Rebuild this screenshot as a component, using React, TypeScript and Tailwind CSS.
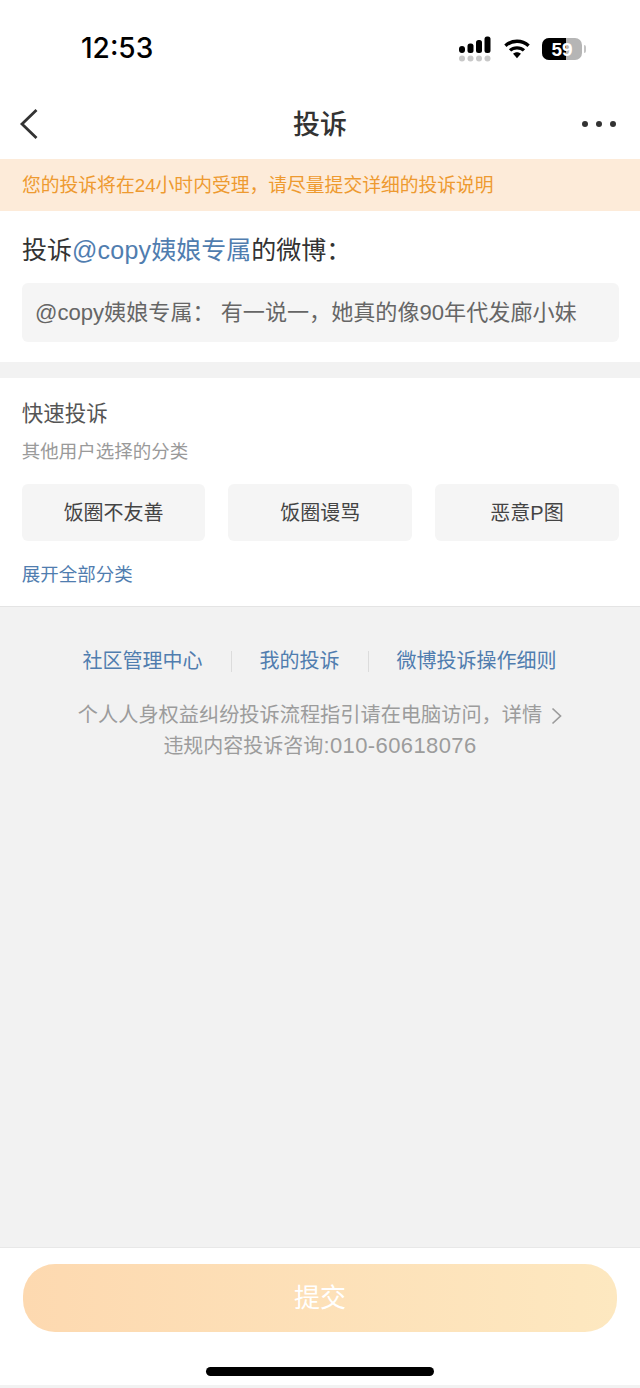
const cjk = "font-['Liberation_Sans','Noto_Sans_CJK_SC',sans-serif]";

function SignalIcon() {
  return (
    <svg width="34" height="26" viewBox="0 0 34 26" className="block">
      <rect x="1" y="10" width="6" height="7" rx="3" fill="#000" />
      <rect x="9.5" y="7.5" width="6" height="9.5" rx="2.5" fill="#000" />
      <rect x="18" y="4" width="6" height="13" rx="2.5" fill="#000" />
      <rect x="26.5" y="0.5" width="6" height="16.5" rx="2.5" fill="#000" />
      <circle cx="4" cy="22.5" r="3" fill="#c8c8c8" />
      <circle cx="12.5" cy="22.5" r="3" fill="#c8c8c8" />
      <circle cx="21" cy="22.5" r="3" fill="#c8c8c8" />
      <circle cx="29.5" cy="22.5" r="3" fill="#c8c8c8" />
    </svg>
  );
}

function WifiIcon() {
  return (
    <svg width="26" height="22" viewBox="0 0 28 22" className="block">
      <path d="M1.5 7.5C8.5 1 19.5 1 26.5 7.5" fill="none" stroke="#000" strokeWidth="3.6" />
      <path d="M6.5 12.5C10.5 8.8 17.5 8.8 21.5 12.5" fill="none" stroke="#000" strokeWidth="3.6" />
      <path d="M9.8 16.2C12.2 14 15.8 14 18.2 16.2L14 21Z" fill="#000" />
    </svg>
  );
}

function BackIcon() {
  return (
    <svg width="20" height="32" viewBox="0 0 20 32" className="block">
      <path d="M17.5 2L3 16L17.5 30" fill="none" stroke="#333" strokeWidth="2.8" />
    </svg>
  );
}

function DetailArrow() {
  return (
    <svg width="11" height="18" viewBox="0 0 11 18" className="ml-[9px] block">
      <path d="M1.5 1.5L9.5 9L1.5 16.5" fill="none" stroke="#9c9c9c" strokeWidth="1.7" />
    </svg>
  );
}

function Battery() {
  return (
    <div className="flex items-center gap-[2px]">
      <div className="relative h-[22px] w-[40px] overflow-hidden rounded-[7px] bg-[#b5b5b5]">
        <div className="absolute inset-y-0 left-0 w-[24px] bg-black" />
        <div className="absolute inset-0 flex items-center justify-center text-[19px] leading-none font-bold text-white font-['Liberation_Sans',sans-serif]">
          59
        </div>
      </div>
      <div className="h-[8px] w-[2px] rounded-r-full bg-[#c4c4c4]" />
    </div>
  );
}

function QuickButton({ label }: { label: string }) {
  return (
    <div className="flex h-[57px] flex-1 items-center justify-center rounded-[6px] bg-[#f5f5f5] text-[20px] text-[#444]">
      {label}
    </div>
  );
}

export default function App() {
  return (
    <div className={`${cjk} flex h-[1388px] w-[640px] flex-col overflow-hidden bg-[#f2f2f2]`}>
      {/* Status bar */}
      <div className="flex h-[100px] shrink-0 items-start justify-between bg-white pr-[54px] pl-[81px] pt-[31px]">
        <span className="text-[28px] leading-[34px] font-medium text-black font-['Inter',sans-serif]">12:53</span>
        <div className="flex items-center gap-[12px] pt-[5px]">
          <SignalIcon />
          <WifiIcon />
          <Battery />
        </div>
      </div>

      {/* Nav */}
      <div className="relative flex h-[59px] shrink-0 items-center justify-between bg-white pr-[24px] pb-[11px] pl-[19px] text-[#333]">
        <BackIcon />
        <span className="absolute inset-x-0 top-[5px] text-center text-[27px] leading-[40px] font-medium">投诉</span>
        <div className="flex gap-[8px]">
          <span className="h-[6px] w-[6px] rounded-full bg-[#333]" />
          <span className="h-[6px] w-[6px] rounded-full bg-[#333]" />
          <span className="h-[6px] w-[6px] rounded-full bg-[#333]" />
        </div>
      </div>

      {/* Notice */}
      <div className="flex h-[52px] shrink-0 items-center bg-[#fdebd9] px-[22px] pt-[2px] text-[18.8px] text-[#ee9a30]">
        您的投诉将在24小时内受理，请尽量提交详细的投诉说明
      </div>

      {/* Target post */}
      <div className="h-[151px] shrink-0 bg-white pr-[21px] pl-[22px] pt-[21px]">
        <div className="text-[25px] leading-[36px] text-[#333]">
          投诉
          <span className="text-[#507daf]">
            <span className="tracking-[0.2px]">@copy</span>姨娘专属
          </span>
          的微博：
        </div>
        <div className="mt-[15px] flex h-[59px] items-center rounded-[6px] bg-[#f5f5f5] px-[13px] text-[22.1px] whitespace-nowrap text-[#666]">
          @copy姨娘专属：&nbsp;有一说一，她真的像90年代发廊小妹
        </div>
      </div>

      {/* Quick complaint */}
      <div className="mt-[16px] flex h-[229px] shrink-0 flex-col border-b border-[#e4e4e4] bg-white pr-[21.2px] pl-[21.8px] pt-[21px]">
        <div className="text-[21.5px] leading-[30px] text-[#555]">快速投诉</div>
        <div className="mt-[10px] text-[18.5px] leading-[26px] text-[#9a9a9a]">其他用户选择的分类</div>
        <div className="mt-[19px] flex gap-[23px]">
          <QuickButton label="饭圈不友善" />
          <QuickButton label="饭圈谩骂" />
          <QuickButton label="恶意P图" />
        </div>
        <div className="mt-[21px] text-[18.5px] leading-[26px] text-[#507daf]">展开全部分类</div>
      </div>

      {/* Links */}
      <div className="flex grow flex-col items-center pt-[39px]">
        <div className="flex items-center pr-[1px] text-[20px] leading-[30px] text-[#507daf]">
          <span>社区管理中心</span>
          <span className="mx-[28px] h-[21px] w-px bg-[#dcdcdc]" />
          <span>我的投诉</span>
          <span className="mx-[28px] h-[21px] w-px bg-[#dcdcdc]" />
          <span>微博投诉操作细则</span>
        </div>
        <div className="mt-[24px] flex items-center text-[20.2px] leading-[31px] text-[#9c9c9c]">
          个人人身权益纠纷投诉流程指引请在电脑访问，详情
          <DetailArrow />
        </div>
        <div className="mt-[-1px] text-[20px] leading-[31px] text-[#9c9c9c]">
          违规内容投诉咨询<span className="text-[22px] tracking-[0.4px]">:010-60618076</span>
        </div>
      </div>

      {/* Submit */}
      <div className="flex h-[138px] shrink-0 flex-col items-center border-t border-[#e8e8e8] bg-white pt-[16px]">
        <div className="flex h-[68px] w-[594px] items-center justify-center rounded-[32px] bg-gradient-to-r from-[#fdd9b0] to-[#fde8c0] text-[26px] text-white">
          提交
        </div>
        <div className="mt-[35px] h-[9px] w-[228px] rounded-full bg-black" />
      </div>
      <div className="h-[3px] shrink-0 bg-[#f2f2f2]" />
    </div>
  );
}
